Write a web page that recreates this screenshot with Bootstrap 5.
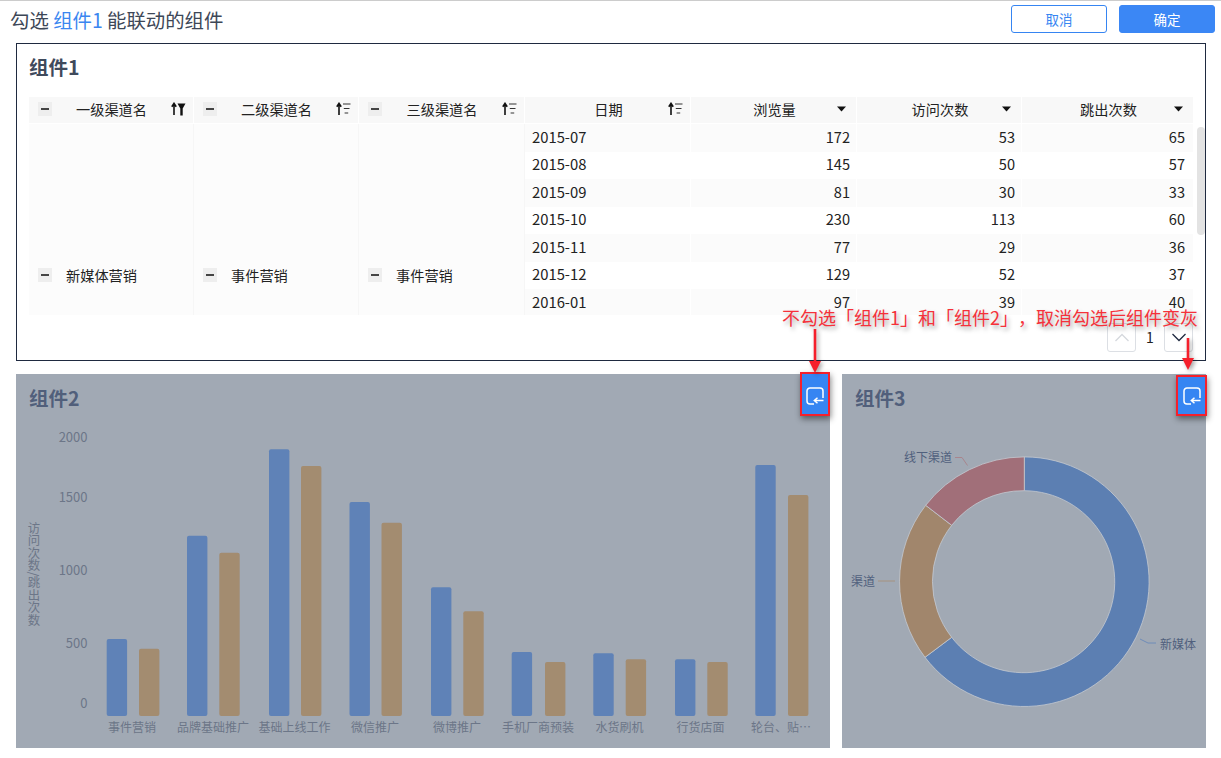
<!DOCTYPE html>
<html lang="zh-CN">
<head>
<meta charset="utf-8">
<title>组件联动</title>
<link href="https://cdn.jsdelivr.net/npm/bootstrap@5.3.0/dist/css/bootstrap.min.css" rel="stylesheet">
<style>
html,body{height:100%;}
body{margin:0;background:#fff;color:#222;font-family:"Noto Sans CJK SC","Liberation Sans",sans-serif;overflow:hidden;}
.stage{position:relative;width:1221px;height:758px;border-top:1px solid #ccc;overflow:hidden;}
.topbar{height:42px;padding:4px 6px 0 10px;}
.topbar-title{font-size:19.4px;color:#3d4757;line-height:30px;}
.topbar-title em{font-style:normal;color:#3b86f0;}
.act{width:96px;height:28px;padding:0;font-size:13.5px;border-radius:3px;line-height:26px;}
.act-ghost{background:#fff;border:1px solid #3685f2;color:#3685f2;}
.act-solid{background:#3b87f5;border:1px solid #3b87f5;color:#fff;margin-left:12px;}
.board{padding:0 15px 0 16px;}
.pane-a{height:318px;border:1px solid #1f2a40;position:relative;background:#fff;}
.pane-title{font-size:19.5px;font-weight:700;line-height:28px;padding:9px 12px 0;height:53px;color:#3f4a5c;}
.sheet-wrap{margin-left:12px;width:1165px;height:218px;overflow:hidden;}
.sheet{table-layout:fixed;width:1165px;border-collapse:separate;border-spacing:0;font-size:14.2px;margin:0;color:#222;}
.sheet th{height:27px;background:#f8f8f8;border-right:1px solid #fff;border-bottom:1px solid #fff;padding:0 7px 2px 9px;font-weight:400;vertical-align:middle;line-height:1;}
.sheet td{height:27.5px;padding:0 6px 1px 7px;border-right:1px solid #fff;vertical-align:middle;line-height:1;background:#fff;box-shadow:none;}
.sheet tr.tint td{background:#fbfbfb;}
.sheet td.merged{background:#fcfcfc!important;padding:0 9px;border-right:1px solid #f6f6f6;}
.sheet td.blank{background:#fff!important;}
.sheet td.last{padding-right:8px;}
.num{text-align:right;font-size:14.6px;}
.dt{font-size:14.8px;}
.hd{display:flex;align-items:center;justify-content:space-between;}
.cellhead{gap:14px;}
.minus{flex:none;width:14px;height:14px;background:#eeeeee;position:relative;display:block;}
.minus::after{content:"";position:absolute;left:3px;right:3px;top:6px;height:2px;background:#444;}
.ico-sort{flex:none;width:15px;height:14px;display:block;}
.ico-caret{flex:none;width:15px;height:6px;display:block;}
.gap15{flex:none;width:15px;}
.scrollthumb{position:absolute;left:1180px;top:83px;width:8px;height:108px;background:#e3e3e3;border-radius:4px;}
.pager{padding:8px 12px 0 0;}
.pagebtn{width:29px;height:29px;padding:0;border:1px solid #dcdfe4;border-radius:3px;background:#fff;display:flex;align-items:center;justify-content:center;}
.pagenum{width:28px;text-align:center;font-size:14px;color:#222;}
.row-b{margin-top:13px;gap:12px;height:374px;}
.pane-g{background:#a1a9b4;position:relative;height:374px;}
.pane-g .pane-title{color:#515f7b;padding:10px 13px 0;height:48px;}
.pane-2{width:814px;flex:none;}
.pane-3{width:364px;flex:none;}
.pane-g svg.plot{display:block;}
.axis{font-size:13px;fill:#6c7688;font-family:"Noto Sans CJK SC","Liberation Sans",sans-serif;}
.cat{font-size:12px;fill:#6c7688;font-family:"Noto Sans CJK SC",sans-serif;}
.lbl{font-size:12px;fill:#50607d;font-family:"Noto Sans CJK SC",sans-serif;}
.axis-name{position:absolute;left:11px;top:148px;writing-mode:vertical-rl;font-size:12.4px;line-height:14px;color:#6c7688;}
.jump{position:absolute;background:#3685f2;border:2.5px solid #f5202c;box-shadow:1px 3px 6px rgba(0,0,0,.45);display:flex;justify-content:center;padding-top:13px;}
.jump-2{left:784px;top:-2px;width:30px;height:44px;}
.jump-3{left:334px;top:1px;width:31px;height:41px;padding-top:10px;}
.note{position:absolute;left:782px;top:307px;font-size:18px;line-height:19px;color:#f5313a;white-space:nowrap;text-shadow:2px 3px 4px rgba(0,0,0,.35);text-spacing-trim:space-all;font-feature-settings:"palt" 0,"halt" 0,"chws" 0;}
.arrow{position:absolute;filter:drop-shadow(2px 2px 2px rgba(0,0,0,.35));}
.arrow-1{left:808px;top:328px;}
.arrow-2{left:1181px;top:337px;}
</style>
</head>
<body>
<div class="stage">
  <div class="topbar d-flex justify-content-between align-items-start">
    <div class="topbar-title">勾选 <em>组件1</em> 能联动的组件</div>
    <div class="d-flex">
      <button type="button" class="btn act act-ghost">取消</button>
      <button type="button" class="btn act act-solid">确定</button>
    </div>
  </div>
  <div class="board">
    <div class="pane-a">
      <div class="pane-title">组件1</div>
      <div class="sheet-wrap">
        <table class="table table-borderless sheet">
          <colgroup><col style="width:165px"><col style="width:165px"><col style="width:166px"><col style="width:166px"><col style="width:166px"><col style="width:165px"><col style="width:172px"></colgroup>
          <thead>
            <tr>
              <th><div class="hd"><span class="minus"></span><span>一级渠道名</span><svg class="ico-sort" viewBox="0 0 15 14"><path d="M3 13V2M.8 4.8 3 1.4l2.2 3.4" fill="none" stroke="#111" stroke-width="1.6"/><path d="M6.5 1.5h8L11.7 6.5v7H9.3v-7z" fill="#111"/></svg></div></th>
              <th><div class="hd"><span class="minus"></span><span>二级渠道名</span><svg class="ico-sort" viewBox="0 0 15 14"><path d="M3 13V2M.8 4.8 3 1.4l2.2 3.4" fill="none" stroke="#111" stroke-width="1.6"/><path d="M7 2h7.5M7.8 6.5h5.7M8.6 11h3.6" stroke="#333" stroke-width="1.2"/></svg></div></th>
              <th><div class="hd"><span class="minus"></span><span>三级渠道名</span><svg class="ico-sort" viewBox="0 0 15 14"><path d="M3 13V2M.8 4.8 3 1.4l2.2 3.4" fill="none" stroke="#111" stroke-width="1.6"/><path d="M7 2h7.5M7.8 6.5h5.7M8.6 11h3.6" stroke="#333" stroke-width="1.2"/></svg></div></th>
              <th><div class="hd"><span class="gap15"></span><span>日期</span><svg class="ico-sort" viewBox="0 0 15 14"><path d="M3 13V2M.8 4.8 3 1.4l2.2 3.4" fill="none" stroke="#111" stroke-width="1.6"/><path d="M7 2h7.5M7.8 6.5h5.7M8.6 11h3.6" stroke="#333" stroke-width="1.2"/></svg></div></th>
              <th><div class="hd"><span class="gap15"></span><span>浏览量</span><svg class="ico-caret" viewBox="0 0 15 6"><path d="M3 .5h9L7.5 5.5z" fill="#111"/></svg></div></th>
              <th><div class="hd"><span class="gap15"></span><span>访问次数</span><svg class="ico-caret" viewBox="0 0 15 6"><path d="M3 .5h9L7.5 5.5z" fill="#111"/></svg></div></th>
              <th><div class="hd"><span class="gap15"></span><span>跳出次数</span><svg class="ico-caret" viewBox="0 0 15 6"><path d="M3 .5h9L7.5 5.5z" fill="#111"/></svg></div></th>
            </tr>
          </thead>
          <tbody>
            <tr class="tint">
              <td class="merged" rowspan="11"><div class="d-flex align-items-center text-nowrap cellhead"><span class="minus"></span><span>新媒体营销</span></div></td>
              <td class="merged" rowspan="11"><div class="d-flex align-items-center text-nowrap cellhead"><span class="minus"></span><span>事件营销</span></div></td>
              <td class="merged" rowspan="11"><div class="d-flex align-items-center text-nowrap cellhead"><span class="minus"></span><span>事件营销</span></div></td>
              <td class="dt">2015-07</td><td class="num">172</td><td class="num">53</td><td class="num last">65</td>
            </tr>
            <tr><td class="dt">2015-08</td><td class="num">145</td><td class="num">50</td><td class="num last">57</td></tr>
            <tr class="tint"><td class="dt">2015-09</td><td class="num">81</td><td class="num">30</td><td class="num last">33</td></tr>
            <tr><td class="dt">2015-10</td><td class="num">230</td><td class="num">113</td><td class="num last">60</td></tr>
            <tr class="tint"><td class="dt">2015-11</td><td class="num">77</td><td class="num">29</td><td class="num last">36</td></tr>
            <tr><td class="dt">2015-12</td><td class="num">129</td><td class="num">52</td><td class="num last">37</td></tr>
            <tr class="tint"><td class="dt">2016-01</td><td class="num">97</td><td class="num">39</td><td class="num last">40</td></tr>
            <tr><td class="blank" colspan="4"></td></tr>
            <tr><td class="blank" colspan="4"></td></tr>
            <tr><td class="blank" colspan="4"></td></tr>
            <tr><td class="blank" colspan="4"></td></tr>
          </tbody>
        </table>
      </div>
      <div class="scrollthumb"></div>
      <div class="pager d-flex justify-content-end align-items-center">
        <button type="button" class="btn pagebtn" aria-label="上一页"><svg width="16" height="9" viewBox="0 0 16 9"><path d="M1.5 8 8 1.5 14.5 8" fill="none" stroke="#d5d8dd" stroke-width="1.3"/></svg></button>
        <span class="pagenum">1</span>
        <button type="button" class="btn pagebtn" aria-label="下一页"><svg width="16" height="9" viewBox="0 0 16 9"><path d="M1.5 1 8 7.5 14.5 1" fill="none" stroke="#1f2a40" stroke-width="1.3"/></svg></button>
      </div>
    </div>
    <div class="d-flex row-b">
      <div class="pane-g pane-2">
        <div class="pane-title">组件2</div>
        <div class="axis-name">访问次数/跳出次数</div>
        <svg class="plot" width="814" height="326" viewBox="16 422 814 326">
          <g class="axis" text-anchor="end">
            <text x="87.5" y="442">2000</text><text x="87.5" y="502">1500</text><text x="87.5" y="575">1000</text><text x="87.5" y="648">500</text><text x="87.5" y="708">0</text>
          </g>
          <g fill="#5f82b7">
            <rect x="106.7" y="639" width="20.4" height="77" rx="2"/>
            <rect x="187" y="535.7" width="20.4" height="180.3" rx="2"/>
            <rect x="269" y="449.3" width="20.4" height="266.7" rx="2"/>
            <rect x="349.5" y="502" width="20.4" height="214" rx="2"/>
            <rect x="431" y="587.3" width="20.4" height="128.7" rx="2"/>
            <rect x="511.7" y="652" width="20.4" height="64" rx="2"/>
            <rect x="593.3" y="653.3" width="20.4" height="62.7" rx="2"/>
            <rect x="675" y="659.3" width="20.4" height="56.7" rx="2"/>
            <rect x="755.3" y="465" width="20.4" height="251" rx="2"/>
          </g>
          <g fill="#a38c70">
            <rect x="139" y="648.7" width="20.4" height="67.3" rx="2"/>
            <rect x="219.3" y="552.7" width="20.4" height="163.3" rx="2"/>
            <rect x="301" y="466" width="20.4" height="250" rx="2"/>
            <rect x="381.5" y="522.7" width="20.4" height="193.3" rx="2"/>
            <rect x="463.3" y="611.3" width="20.4" height="104.7" rx="2"/>
            <rect x="545" y="662" width="20.4" height="54" rx="2"/>
            <rect x="625.7" y="659.3" width="20.4" height="56.7" rx="2"/>
            <rect x="707.3" y="662" width="20.4" height="54" rx="2"/>
            <rect x="788" y="495" width="20.4" height="221" rx="2"/>
          </g>
          <g class="cat" text-anchor="middle">
            <text x="132" y="732">事件营销</text><text x="213" y="732">品牌基础推广</text><text x="294.5" y="732">基础上线工作</text><text x="375" y="732">微信推广</text><text x="457" y="732">微博推广</text><text x="538" y="732">手机厂商预装</text><text x="619.5" y="732">水货刷机</text><text x="700.5" y="732">行货店面</text><text x="781" y="732">轮台、贴…</text>
          </g>
        </svg>
        <div class="jump jump-2"><svg width="18" height="18" viewBox="0 0 18 18"><path d="M8 17H4a3 3 0 0 1-3-3V4a3 3 0 0 1 3-3h10a3 3 0 0 1 3 3v7" fill="none" stroke="#fff" stroke-width="1.5"/><path d="M17.5 13.5H8.5M11.5 10.7 8.3 13.5l3.2 2.8" fill="none" stroke="#fff" stroke-width="1.5"/></svg></div>
      </div>
      <div class="pane-g pane-3">
        <div class="pane-title">组件3</div>
        <svg class="plot" width="364" height="326" viewBox="842 422 364 326">
          <path d="M1024.3 456.9A124.8 124.8 0 1 1 925 657.3L951.7 637.3A91 91 0 1 0 1024.3 490.7Z" fill="#5c7fb2" stroke="#c4c9d0" stroke-width=".8"/>
          <path d="M925 657.3A124.8 124.8 0 0 1 925.7 505.3L951.7 525.3A91 91 0 0 0 951.7 637.3Z" fill="#a1866c" stroke="#c4c9d0" stroke-width=".8"/>
          <path d="M925.7 505.3A124.8 124.8 0 0 1 1024.3 456.9V490.7A91 91 0 0 0 951.7 525.3Z" fill="#a16f79" stroke="#c4c9d0" stroke-width=".8"/>
          <path d="M955 457.5h7l5.5 8" fill="none" stroke="#a8858d" stroke-width="1"/>
          <path d="M878 581h17" fill="none" stroke="#a6927e" stroke-width="1"/>
          <path d="M1140 639l8 4h8" fill="none" stroke="#6f8cb8" stroke-width="1"/>
          <g class="lbl"><text x="904" y="462">线下渠道</text><text x="851" y="585.5">渠道</text><text x="1160" y="648.5">新媒体</text></g>
        </svg>
        <div class="jump jump-3"><svg width="18" height="18" viewBox="0 0 18 18"><path d="M8 17H4a3 3 0 0 1-3-3V4a3 3 0 0 1 3-3h10a3 3 0 0 1 3 3v7" fill="none" stroke="#fff" stroke-width="1.5"/><path d="M17.5 13.5H8.5M11.5 10.7 8.3 13.5l3.2 2.8" fill="none" stroke="#fff" stroke-width="1.5"/></svg></div>
      </div>
    </div>
  </div>
  <div class="note">不勾选「组件1」和「组件2」，取消勾选后组件变灰</div>
  <svg class="arrow arrow-1" width="14" height="44" viewBox="0 0 14 44"><path d="M7 0V33" stroke="#f5202c" stroke-width="2.6"/><path d="M1 32h12L7 44z" fill="#f5202c"/></svg>
  <svg class="arrow arrow-2" width="14" height="32" viewBox="0 0 14 32"><path d="M7 0V21" stroke="#f5202c" stroke-width="2.6"/><path d="M1 20h12L7 32z" fill="#f5202c"/></svg>
</div>
</body>
</html>
